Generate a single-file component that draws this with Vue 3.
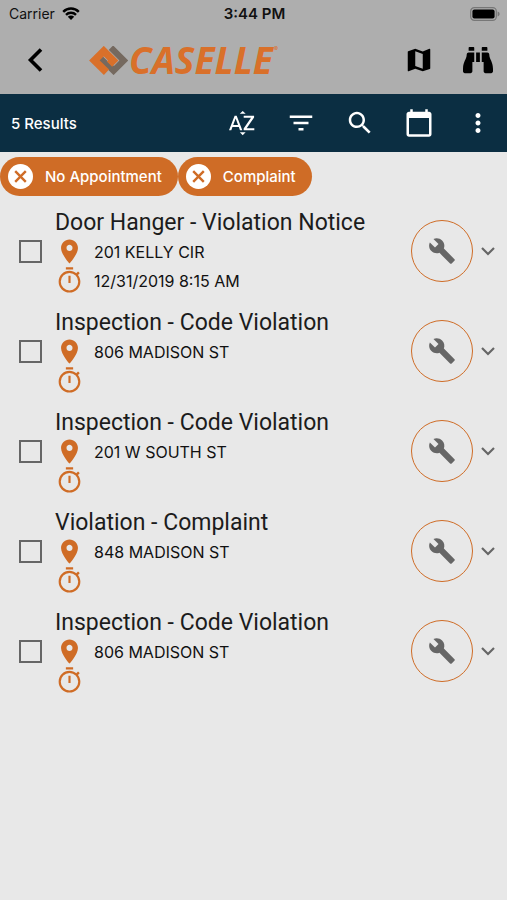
<template>
  <div class="app">
    <header class="top">
      <div class="status-bar">
        <div class="carrier">
          <span>Carrier</span>
          <svg class="wifi" viewBox="0 0 18 13" aria-hidden="true">
            <path d="M1.2 4.8a11 11 0 0 1 15.6 0M4 7.8a7 7 0 0 1 10 0" fill="none" stroke="#000" stroke-width="2.4" />
            <path d="M9 13L5.8 9.8a4.6 4.6 0 0 1 6.4 0z" />
          </svg>
        </div>
        <div class="clock">3:44 PM</div>
        <div class="battery-wrap">
          <svg class="battery" viewBox="0 0 30 14" aria-hidden="true">
            <rect x="0.7" y="0.7" width="25.6" height="12.6" rx="3.6" fill="none" stroke="#777" stroke-width="1.2" />
            <rect x="2.4" y="2.4" width="22.2" height="9.2" rx="2" />
            <path d="M27.6 4.6c1.6.6 2 1.5 2 2.4s-.4 1.8-2 2.4z" fill="#777" />
          </svg>
        </div>
      </div>

      <div class="nav">
        <button type="button" class="btn-back" aria-label="Back">
          <svg viewBox="0 0 16 24"><path d="M14 1.5L3.5 12 14 22.5" fill="none" stroke="#000" stroke-width="3.6" /></svg>
        </button>
        <div class="logo">
          <svg class="logo-mark" viewBox="0 0 116 86" aria-hidden="true">
            <g fill="none">
              <path d="M64 6L101 43 73 71 42 41 48 35" stroke="#75695f" stroke-width="22" />
              <path d="M44 15L72 43 65 50" stroke="#aeaeae" stroke-width="26" />
              <path d="M52 78L16 43 44 15 72 43 61 54" stroke="#d9702a" stroke-width="22" />
            </g>
          </svg>
          <span class="logo-text">CASELLE</span>
          <span class="logo-reg">®</span>
        </div>
        <button type="button" class="btn-icon" aria-label="Map">
          <svg viewBox="0 0 24 24"><path :d="icons.map" /></svg>
        </button>
        <button type="button" class="btn-icon" aria-label="Find">
          <svg viewBox="0 0 512 512"><path :d="icons.binoculars" /></svg>
        </button>
      </div>
    </header>

    <div class="toolbar">
      <div class="results">{{ items.length }} Results</div>
      <button v-for="t in tools" :key="t.icon" type="button" class="btn-icon" :aria-label="t.label">
        <svg viewBox="0 0 24 24"><path :d="icons[t.icon]" /></svg>
      </button>
    </div>

    <div class="chips">
      <button v-for="f in filters" :key="f" type="button" class="chip" @click="removeFilter(f)">
        <svg class="chip-icon" viewBox="0 0 25 25" aria-hidden="true">
          <circle cx="12.5" cy="12.5" r="12.5" fill="#fff" />
          <path d="M7.2 7.2l10.6 10.6M17.8 7.2l-10.6 10.6" stroke="#cf6c26" stroke-width="2.4" />
        </svg>
        <span>{{ f }}</span>
      </button>
    </div>

    <ul class="list">
      <li v-for="item in items" :key="item.id" class="row">
        <input v-model="item.checked" type="checkbox" class="check" :aria-label="item.title" />
        <div class="info">
          <h2>{{ item.title }}</h2>
          <div class="line">
            <svg viewBox="0 0 24 24" aria-hidden="true"><path :d="icons.place" /></svg>
            <span>{{ item.address }}</span>
          </div>
          <div class="line">
            <svg viewBox="0 0 24 24" aria-hidden="true"><path :d="icons.timer" /></svg>
            <span>{{ item.date }}</span>
          </div>
        </div>
        <button type="button" class="btn-work" aria-label="Work">
          <svg viewBox="0 0 24 24"><path :d="icons.wrench" /></svg>
        </button>
        <button type="button" class="btn-expand" aria-label="Expand">
          <svg viewBox="0 0 14 9"><path d="M1 1l6 6 6-6" fill="none" stroke="#666" stroke-width="2.2" /></svg>
        </button>
      </li>
    </ul>
  </div>
</template>

<script setup>
import { ref } from 'vue'

const icons = {
  map: 'M20.5 3l-.16.03L15 5.1 9 3 3.36 4.9c-.21.07-.36.25-.36.48V20.5c0 .28.22.5.5.5l.16-.03L9 18.9l6 2.1 5.64-1.9c.21-.07.36-.25.36-.48V3.5c0-.28-.22-.5-.5-.5zM15 19l-6-2.11V5l6 2.11V19z',
  binoculars: 'M416 48c0-8.84-7.16-16-16-16h-64c-8.84 0-16 7.16-16 16v48h96V48zM63.91 159.99C61.4 253.84 3.46 274.22 0 404v44c0 17.67 14.33 32 32 32h96c17.67 0 32-14.33 32-32V288h32V128H95.84c-17.63 0-31.45 14.37-31.93 31.99zm384.18 0c-.48-17.62-14.3-31.99-31.93-31.99H320v160h32v160c0 17.67 14.33 32 32 32h96c17.67 0 32-14.33 32-32v-44c-3.46-129.78-61.4-150.16-63.91-244.01zM176 32h-64c-8.84 0-16 7.16-16 16v48h96V48c0-8.84-7.16-16-16-16zm48 256h64V128h-64v160z',
  sort: 'M14.94 4.66h-4.72l2.36-2.36 2.36 2.36zm-4.69 14.71h4.66l-2.33 2.33-2.33-2.33zM6.1 6.27L1.6 17.73h1.84l.92-2.45h5.11l.92 2.45h1.84L7.74 6.27H6.1zm-1.13 7.37l1.94-5.18 1.94 5.18H4.97zm10.76 2.5h6.12v1.59h-8.53v-1.29l5.92-8.56h-5.88v-1.6h8.3v1.26l-5.93 8.6z',
  filter: 'M10 18h4v-2h-4v2zM3 6v2h18V6H3zm3 7h12v-2H6v2z',
  search: 'M15.5 14h-.79l-.28-.27C15.41 12.59 16 11.11 16 9.5 16 5.91 13.09 3 9.5 3S3 5.91 3 9.5 5.91 16 9.5 16c1.61 0 3.09-.59 4.23-1.57l.27.28v.79l5 4.99L20.49 19l-4.99-5zm-6 0C7.01 14 5 11.99 5 9.5S7.01 5 9.5 5 14 7.01 14 9.5 11.99 14 9.5 14z',
  calendar: 'M20 3h-1V1h-2v2H7V1H5v2H4c-1.1 0-2 .9-2 2v16c0 1.1.9 2 2 2h16c1.1 0 2-.9 2-2V5c0-1.1-.9-2-2-2zm0 18H4V8h16v13z',
  more: 'M12 8c1.1 0 2-.9 2-2s-.9-2-2-2-2 .9-2 2 .9 2 2 2zm0 2c-1.1 0-2 .9-2 2s.9 2 2 2 2-.9 2-2-.9-2-2-2zm0 6c-1.1 0-2 .9-2 2s.9 2 2 2 2-.9 2-2-.9-2-2-2z',
  place: 'M12 2C8.13 2 5 5.13 5 9c0 5.25 7 13 7 13s7-7.75 7-13c0-3.87-3.13-7-7-7zm0 9.5c-1.38 0-2.5-1.12-2.5-2.5s1.12-2.5 2.5-2.5 2.5 1.12 2.5 2.5-1.12 2.5-2.5 2.5z',
  timer: 'M15 1H9v1.8h6V1zm-3.9 13h1.8V8h-1.8v6zm7.93-6.61l1.42-1.42c-.43-.51-.9-.99-1.41-1.41l-1.42 1.42C16.07 4.74 14.12 4 12 4c-4.97 0-9 4.03-9 9s4.02 9 9 9 9-4.03 9-9c0-2.12-.74-4.07-1.97-5.61zM12 20.2a7.2 7.2 0 1 1 0-14.4 7.2 7.2 0 0 1 0 14.4z',
  wrench: 'M22.7 19l-9.1-9.1c.9-2.3.4-5-1.5-6.9-2-2-5-2.4-7.4-1.3L9 6 6 9 1.6 4.7C.4 7.1.9 10.1 2.9 12.1c1.9 1.9 4.6 2.4 6.9 1.5l9.1 9.1c.4.4 1 .4 1.4 0l2.3-2.3c.5-.4.5-1.1.1-1.4z'
}

const tools = [
  { icon: 'sort', label: 'Sort' },
  { icon: 'filter', label: 'Filter' },
  { icon: 'search', label: 'Search' },
  { icon: 'calendar', label: 'Calendar' },
  { icon: 'more', label: 'More' }
]

const filters = ref(['No Appointment', 'Complaint'])

const items = ref([
  { id: 1, title: 'Door Hanger - Violation Notice', address: '201 KELLY CIR', date: '12/31/2019 8:15 AM', checked: false },
  { id: 2, title: 'Inspection - Code Violation', address: '806 MADISON ST', date: '', checked: false },
  { id: 3, title: 'Inspection - Code Violation', address: '201 W SOUTH ST', date: '', checked: false },
  { id: 4, title: 'Violation - Complaint', address: '848 MADISON ST', date: '', checked: false },
  { id: 5, title: 'Inspection - Code Violation', address: '806 MADISON ST', date: '', checked: false }
])

function removeFilter(name) {
  filters.value = filters.value.filter((f) => f !== name)
}
</script>

<style>
body {
  margin: 0;
  background: #e8e8e8;
}
</style>

<style scoped>
.app {
  min-height: 100vh;
  background: #e8e8e8;
  color: #1c1c1c;
  font-family: Inter, "Liberation Sans", sans-serif;
}

button {
  border: none;
  padding: 0;
  background: none;
  color: inherit;
  font-family: inherit;
  cursor: pointer;
}

svg {
  display: block;
  flex: none;
}

.top {
  background: #aeaeae;
}

.status-bar {
  display: grid;
  grid-template-columns: 1fr auto 1fr;
  align-items: center;
  height: 27px;
  padding: 0 7px 0 9px;
  font-size: 14px;
  color: #111;
}

.carrier {
  display: flex;
  align-items: center;
  gap: 7px;
}

.wifi {
  width: 18px;
  height: 13px;
}

.clock {
  font-size: 15px;
  font-weight: 600;
}

.battery-wrap {
  display: flex;
  justify-content: flex-end;
}

.battery {
  width: 30px;
  height: 14px;
}

.nav {
  display: flex;
  align-items: center;
  height: 66px;
  padding-bottom: 1px;
}

.btn-back {
  display: flex;
  align-items: center;
  justify-content: center;
  width: 70px;
  height: 60px;
}

.btn-back svg {
  width: 16px;
  height: 24px;
}

.logo {
  flex: 1;
  display: flex;
  align-items: center;
  padding-left: 19px;
  color: #d9702a;
}

.logo-mark {
  width: 39px;
  height: 29px;
}

.logo-text {
  padding: 0 1px;
  font-family: "Open Sans", "Noto Sans", sans-serif;
  font-size: 37px;
  line-height: 36px;
  font-weight: 700;
  font-style: italic;
}

.logo-reg {
  align-self: flex-start;
  padding-top: 3px;
  font-size: 6px;
}

.btn-icon {
  display: flex;
  align-items: center;
  justify-content: center;
  width: 59px;
  height: 58px;
}

.btn-icon svg {
  width: 30px;
  height: 30px;
  fill: currentColor;
}

.nav .btn-icon {
  color: #000;
}

.toolbar {
  display: flex;
  align-items: center;
  height: 58px;
  background: #0b2e42;
  color: #fff;
}

.results {
  flex: 1;
  padding-left: 11px;
  font-size: 15px;
  font-weight: 500;
}

.chips {
  display: flex;
  flex-wrap: wrap;
  padding: 5px 0;
}

.chip {
  display: flex;
  align-items: center;
  gap: 12px;
  height: 39px;
  padding: 0 16px 0 8px;
  border-radius: 20px;
  background: #cf6c26;
  color: #fff;
  font-size: 15px;
  font-weight: 500;
}

.chip-icon {
  width: 25px;
  height: 25px;
}

.list {
  margin: 0;
  padding: 0;
  list-style: none;
}

.row {
  display: flex;
  align-items: center;
  padding: 6px 12px 6px 19px;
}

.check {
  appearance: none;
  width: 23px;
  height: 23px;
  margin: 0;
  border: 2px solid #666;
  cursor: pointer;
}

.check:checked {
  background: #cf6c26;
}

.info {
  flex: 1;
  min-width: 0;
  padding-left: 13px;
}

.info h2 {
  margin: 0;
  padding-top: 2px;
  font-family: Roboto, Inter, sans-serif;
  font-size: 23px;
  line-height: 28px;
  font-weight: 400;
}

.line {
  display: flex;
  align-items: center;
  gap: 10px;
  height: 29px;
  font-size: 16px;
  color: #111;
}

.line svg {
  width: 29px;
  height: 29px;
  fill: #cf6c26;
}

.btn-work {
  display: flex;
  align-items: center;
  justify-content: center;
  width: 62px;
  height: 62px;
  border: 1px solid #cf6c26;
  border-radius: 50%;
}

.btn-work svg {
  width: 28px;
  height: 28px;
  fill: #666;
}

.btn-expand {
  display: flex;
  align-items: center;
  justify-content: center;
  width: 14px;
  height: 40px;
  margin-left: 8px;
}

.btn-expand svg {
  width: 14px;
  height: 9px;
}
</style>
